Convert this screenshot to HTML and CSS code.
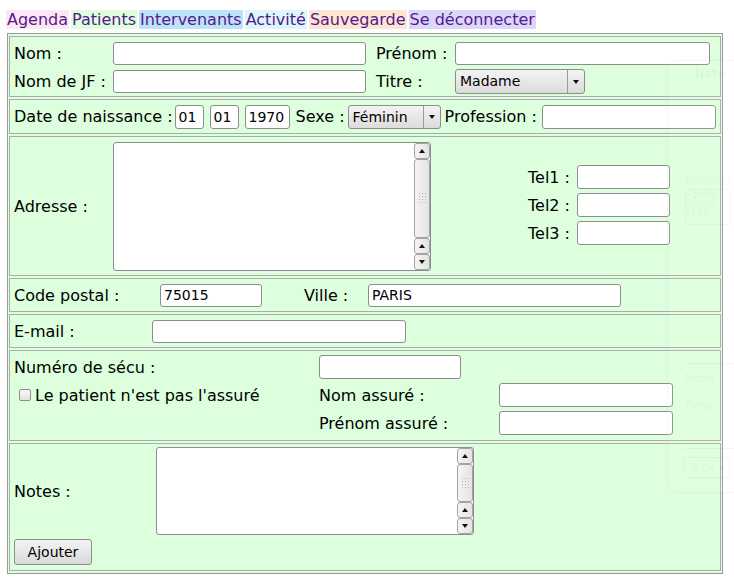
FILE: index.html
```html
<!DOCTYPE html>
<html lang="fr">
<head>
<meta charset="utf-8">
<title>Patients</title>
<link rel="stylesheet" href="styles.css">
</head>
<body>
<nav class="tabs">
  <a class="tab t-agenda" href="#">Agenda</a>
  <a class="tab t-patients" href="#">Patients</a>
  <a class="tab t-interv" href="#">Intervenants</a>
  <a class="tab t-activite" href="#">Activité</a>
  <a class="tab t-sauve" href="#">Sauvegarde</a>
  <a class="tab t-deco" href="#">Se déconnecter</a>
</nav>

<div class="form">
  <div class="cell c1">
    <span class="lbl">Nom :</span>
    <input class="field w253" type="text">
    <span class="lbl">Prénom :</span>
    <input class="field w255" type="text">
    <span class="lbl">Nom de JF :</span>
    <input class="field w253" type="text">
    <span class="lbl">Titre :</span>
    <div class="select w130"><span class="sel-text">Madame</span><span class="sel-btn"><span class="tri-down"></span></span></div>
  </div>

  <div class="cell c2">
    <span class="lbl">Date de naissance :</span>
    <input class="field w29 ml2" type="text" value="01">
    <input class="field w29 ml6" type="text" value="01">
    <input class="field w45 ml6" type="text" value="1970">
    <span class="lbl ml6">Sexe :</span>
    <div class="select w93 ml3"><span class="sel-text">Féminin</span><span class="sel-btn"><span class="tri-down"></span></span></div>
    <span class="lbl ml4">Profession :</span>
    <input class="field w174 ml5" type="text">
  </div>

  <div class="cell c3">
    <span class="lbl col99">Adresse :</span>
    <div class="tarea addr">
      <div class="tarea-body"></div>
      <div class="sbar">
        <div class="sbtn"><span class="tri-up"></span></div>
        <div class="sthumb"><span class="grip"></span></div>
        <div class="sbtn"><span class="tri-up"></span></div>
        <div class="sbtn"><span class="tri-down"></span></div>
      </div>
    </div>
    <div class="tels">
      <span class="lbl">Tel1 :</span><input class="field w93 h24" type="text">
      <span class="lbl">Tel2 :</span><input class="field w93 h24" type="text">
      <span class="lbl">Tel3 :</span><input class="field w93 h24" type="text">
    </div>
  </div>

  <div class="cell c4">
    <span class="lbl col146">Code postal :</span>
    <input class="field w102" type="text" value="75015">
    <span class="lbl ville">Ville :</span>
    <input class="field w253" type="text" value="PARIS">
  </div>

  <div class="cell c5">
    <span class="lbl col138">E-mail :</span>
    <input class="field w254" type="text">
  </div>

  <div class="cell c6">
    <span class="lbl">Numéro de sécu :</span>
    <input class="field w142 h24 span2" type="text">
    <label class="chk lbl"><span class="box"></span>Le patient n'est pas l'assuré</label>
    <span class="lbl">Nom assuré :</span>
    <input class="field w174 h24" type="text">
    <span class="lbl c2start">Prénom assuré :</span>
    <input class="field w174 h24" type="text">
  </div>

  <div class="cell c7">
    <div class="notes-row">
      <span class="lbl col142">Notes :</span>
      <div class="tarea notes">
        <div class="tarea-body"></div>
        <div class="sbar">
          <div class="sbtn"><span class="tri-up"></span></div>
          <div class="sthumb"><span class="grip"></span></div>
          <div class="sbtn"><span class="tri-up"></span></div>
          <div class="sbtn"><span class="tri-down"></span></div>
        </div>
      </div>
    </div>
    <button class="btn" type="button">Ajouter</button>
  </div>
</div>

<div class="ghost" aria-hidden="true">
  <div class="g-title">liste</div>
  <div class="g-text g-search">Recherche</div>
  <div class="g-table"><span>Agenda</span><span>Rendez</span><span>02 06</span></div>
  <div class="g-line"></div>
  <div class="g-text g-mode">Mode</div>
  <div class="g-text g-delai">Délai</div>
  <div class="g-line g-line2"></div>
  <div class="g-btn">Aide ▾</div>
</div>
</body>
</html>
```

FILE: styles.css
```css
body {
  margin: 0;
  font-family: "DejaVu Sans", sans-serif;
  font-size: 16px;
  color: #000;
  background: #fff;
}

/* ---------- tabs ---------- */
.tabs {
  display: flex;
  gap: 2px;
  margin: 10px 0 0 6px;
  height: 19px;
  line-height: 19px;
}
.tab {
  color: #551a8b;
  text-decoration: none;
  padding: 0 1px;
  white-space: nowrap;
}
.t-agenda { background: #fde7f4; }
.t-patients { background: #ddffdd; }
.t-interv { background: #bde3fb; }
.t-activite { background: #dcf6fc; }
.t-sauve { background: #fde5d2; }
.t-deco { background: #dcd6fb; }

/* ---------- form frame ---------- */
.form {
  margin: 4px 0 0 7px;
  width: 716px;
  box-sizing: border-box;
  border: 1px solid #9a9a9a;
  padding: 2px 1px;
  background: #ddffdd;
  display: flex;
  flex-direction: column;
  gap: 2px;
}
.cell {
  border: 1px solid #ababab;
  box-sizing: border-box;
  background: #ddffdd;
  padding-left: 4px;
}

.lbl { white-space: nowrap; line-height: 19px; }

/* ---------- inputs ---------- */
.field {
  box-sizing: border-box;
  height: 23px;
  margin: 0;
  padding: 0 3px;
  border: 1px solid #8d8d8d;
  border-radius: 3px;
  background: #fff;
  font-family: "DejaVu Sans", sans-serif;
  font-size: 14px;
  color: #000;
  outline: none;
}
.h24 { height: 24px; }
.w29 { width: 29px; }
.w45 { width: 45px; }
.w93 { width: 93px; }
.w102 { width: 102px; }
.w130 { width: 130px; }
.w142 { width: 142px; }
.w174 { width: 174px; }
.w253 { width: 253px; }
.w254 { width: 254px; }
.w255 { width: 255px; }
.ml2 { margin-left: 2px; }
.ml3 { margin-left: 3px; }
.ml4 { margin-left: 4px; }
.ml5 { margin-left: 5px; }
.ml6 { margin-left: 6px; }

/* ---------- select ---------- */
.select {
  box-sizing: border-box;
  height: 25px;
  display: flex;
  align-items: stretch;
  border: 1px solid #8d8d8d;
  border-radius: 3px;
  background: linear-gradient(#f3f3f3, #dcdcdc);
  font-size: 14px;
}
.sel-text {
  flex: 1;
  padding-left: 4px;
  line-height: 23px;
  white-space: nowrap;
  overflow: hidden;
}
.sel-btn {
  width: 16px;
  border-left: 1px solid #9a9a9a;
  display: flex;
  align-items: center;
  justify-content: center;
}
.tri-down {
  width: 0; height: 0;
  border-left: 3.5px solid transparent;
  border-right: 3.5px solid transparent;
  border-top: 4px solid #111;
}
.tri-up {
  width: 0; height: 0;
  border-left: 3.5px solid transparent;
  border-right: 3.5px solid transparent;
  border-bottom: 4px solid #111;
}

/* ---------- row 1 ---------- */
.c1 {
  height: 61px;
  padding-top: 4px;
  display: grid;
  grid-template-columns: 99px 263px 79px auto;
  grid-template-rows: 25px 25px;
  row-gap: 3px;
  align-items: center;
}

/* ---------- row 2 ---------- */
.c2 {
  height: 35px;
  display: flex;
  align-items: center;
}
.c2 .field { height: 24px; }
.c2 .select { height: 24px; }
.c2 .sel-text { line-height: 22px; }

/* ---------- textareas ---------- */
.tarea {
  box-sizing: border-box;
  display: flex;
  border: 1px solid #8d8d8d;
  border-radius: 3px;
  background: #fff;
  width: 318px;
}
.addr { height: 129px; }
.notes { height: 88px; }
.tarea-body { flex: 1; }
.sbar {
  width: 16px;
  display: flex;
  flex-direction: column;
}
.sbtn, .sthumb {
  box-sizing: border-box;
  border: 1px solid #a3a3a3;
  border-radius: 3px;
  background: linear-gradient(90deg, #f4f4f4, #e4e4e4);
  display: flex;
  align-items: center;
  justify-content: center;
}
.sbtn { height: 16px; }
.sthumb { flex: 1; }
.grip {
  width: 9px;
  height: 12px;
  background-image: radial-gradient(circle, #b4b4b4 0.7px, transparent 0.9px);
  background-size: 3px 3px;
}

.col99 { width: 99px; }
.col138 { width: 138px; }
.col142 { width: 142px; }
.col146 { width: 146px; }

.c3 {
  height: 140px;
  display: flex;
  align-items: center;
}
.tels {
  margin-left: 97px;
  margin-bottom: 2px;
  display: grid;
  grid-template-columns: auto 93px;
  column-gap: 7px;
  row-gap: 4px;
  align-items: center;
}

/* ---------- row 4 / 5 ---------- */
.c4, .c5 {
  height: 34px;
  display: flex;
  align-items: center;
}
.ville { width: 64px; margin-left: 42px; }

/* ---------- row 6 ---------- */
.c6 {
  height: 91px;
  padding-top: 4px;
  display: grid;
  grid-template-columns: 305px 180px 174px;
  grid-template-rows: 24px 24px 24px;
  row-gap: 4px;
  align-items: center;
}
.c6 .span2 { grid-column: 2 / span 2; }
.c6 .c2start { grid-column: 2; }
.chk {
  display: flex;
  align-items: center;
}
.box {
  box-sizing: border-box;
  width: 12px;
  height: 12px;
  margin: 0 4px 0 5px;
  border: 1px solid #8d8d8d;
  border-radius: 2px;
  background: linear-gradient(#fafafa, #e2e2e2);
}

/* ---------- row 7 ---------- */
.c7 {
  height: 128px;
  padding-top: 3px;
}
.notes-row {
  display: flex;
  align-items: center;
}
.btn {
  margin: 4px 0 0 0;
  box-sizing: border-box;
  width: 78px;
  height: 26px;
  padding: 0;
  border: 1px solid #8d8d8d;
  border-radius: 3px;
  background: linear-gradient(#f4f4f4, #d9d9d9);
  font-family: "DejaVu Sans", sans-serif;
  font-size: 14px;
  color: #000;
}

/* ---------- faded window overlay ---------- */
.ghost {
  position: absolute;
  left: 667px;
  top: 60px;
  width: 67px;
  height: 433px;
  box-sizing: border-box;
  border: 1px solid rgba(0, 0, 0, 0.035);
  border-right: none;
  border-radius: 8px 0 0 8px;
  background: rgba(255, 255, 255, 0.08);
  pointer-events: none;
  overflow: hidden;
  font-size: 11px;
  color: rgba(0, 0, 0, 0.05);
  padding-left: 17px;
}
.g-title { margin-top: 5px; padding-left: 10px; font-weight: bold; font-size: 13px; }
.g-text { white-space: nowrap; }
.g-search { margin-top: 94px; font-size: 9px; }
.g-table {
  margin-top: 4px;
  display: flex;
  flex-direction: column;
  font-size: 8px;
  border: 1px solid rgba(0, 0, 0, 0.03);
  width: 44px;
  height: 34px;
  white-space: nowrap;
}
.g-line { margin-top: 138px; margin-left: -1px; border-top: 1px solid rgba(0, 0, 0, 0.035); }
.g-mode { margin-top: 8px; }
.g-delai { margin-top: 14px; }
.g-line2 { margin-top: 36px; }
.g-btn {
  margin-top: 8px;
  margin-left: -1px;
  width: 46px;
  height: 21px;
  box-sizing: border-box;
  border: 1px solid rgba(0, 0, 0, 0.035);
  border-radius: 3px;
  padding-left: 6px;
  line-height: 19px;
  font-size: 11px;
  white-space: nowrap;
}
```
